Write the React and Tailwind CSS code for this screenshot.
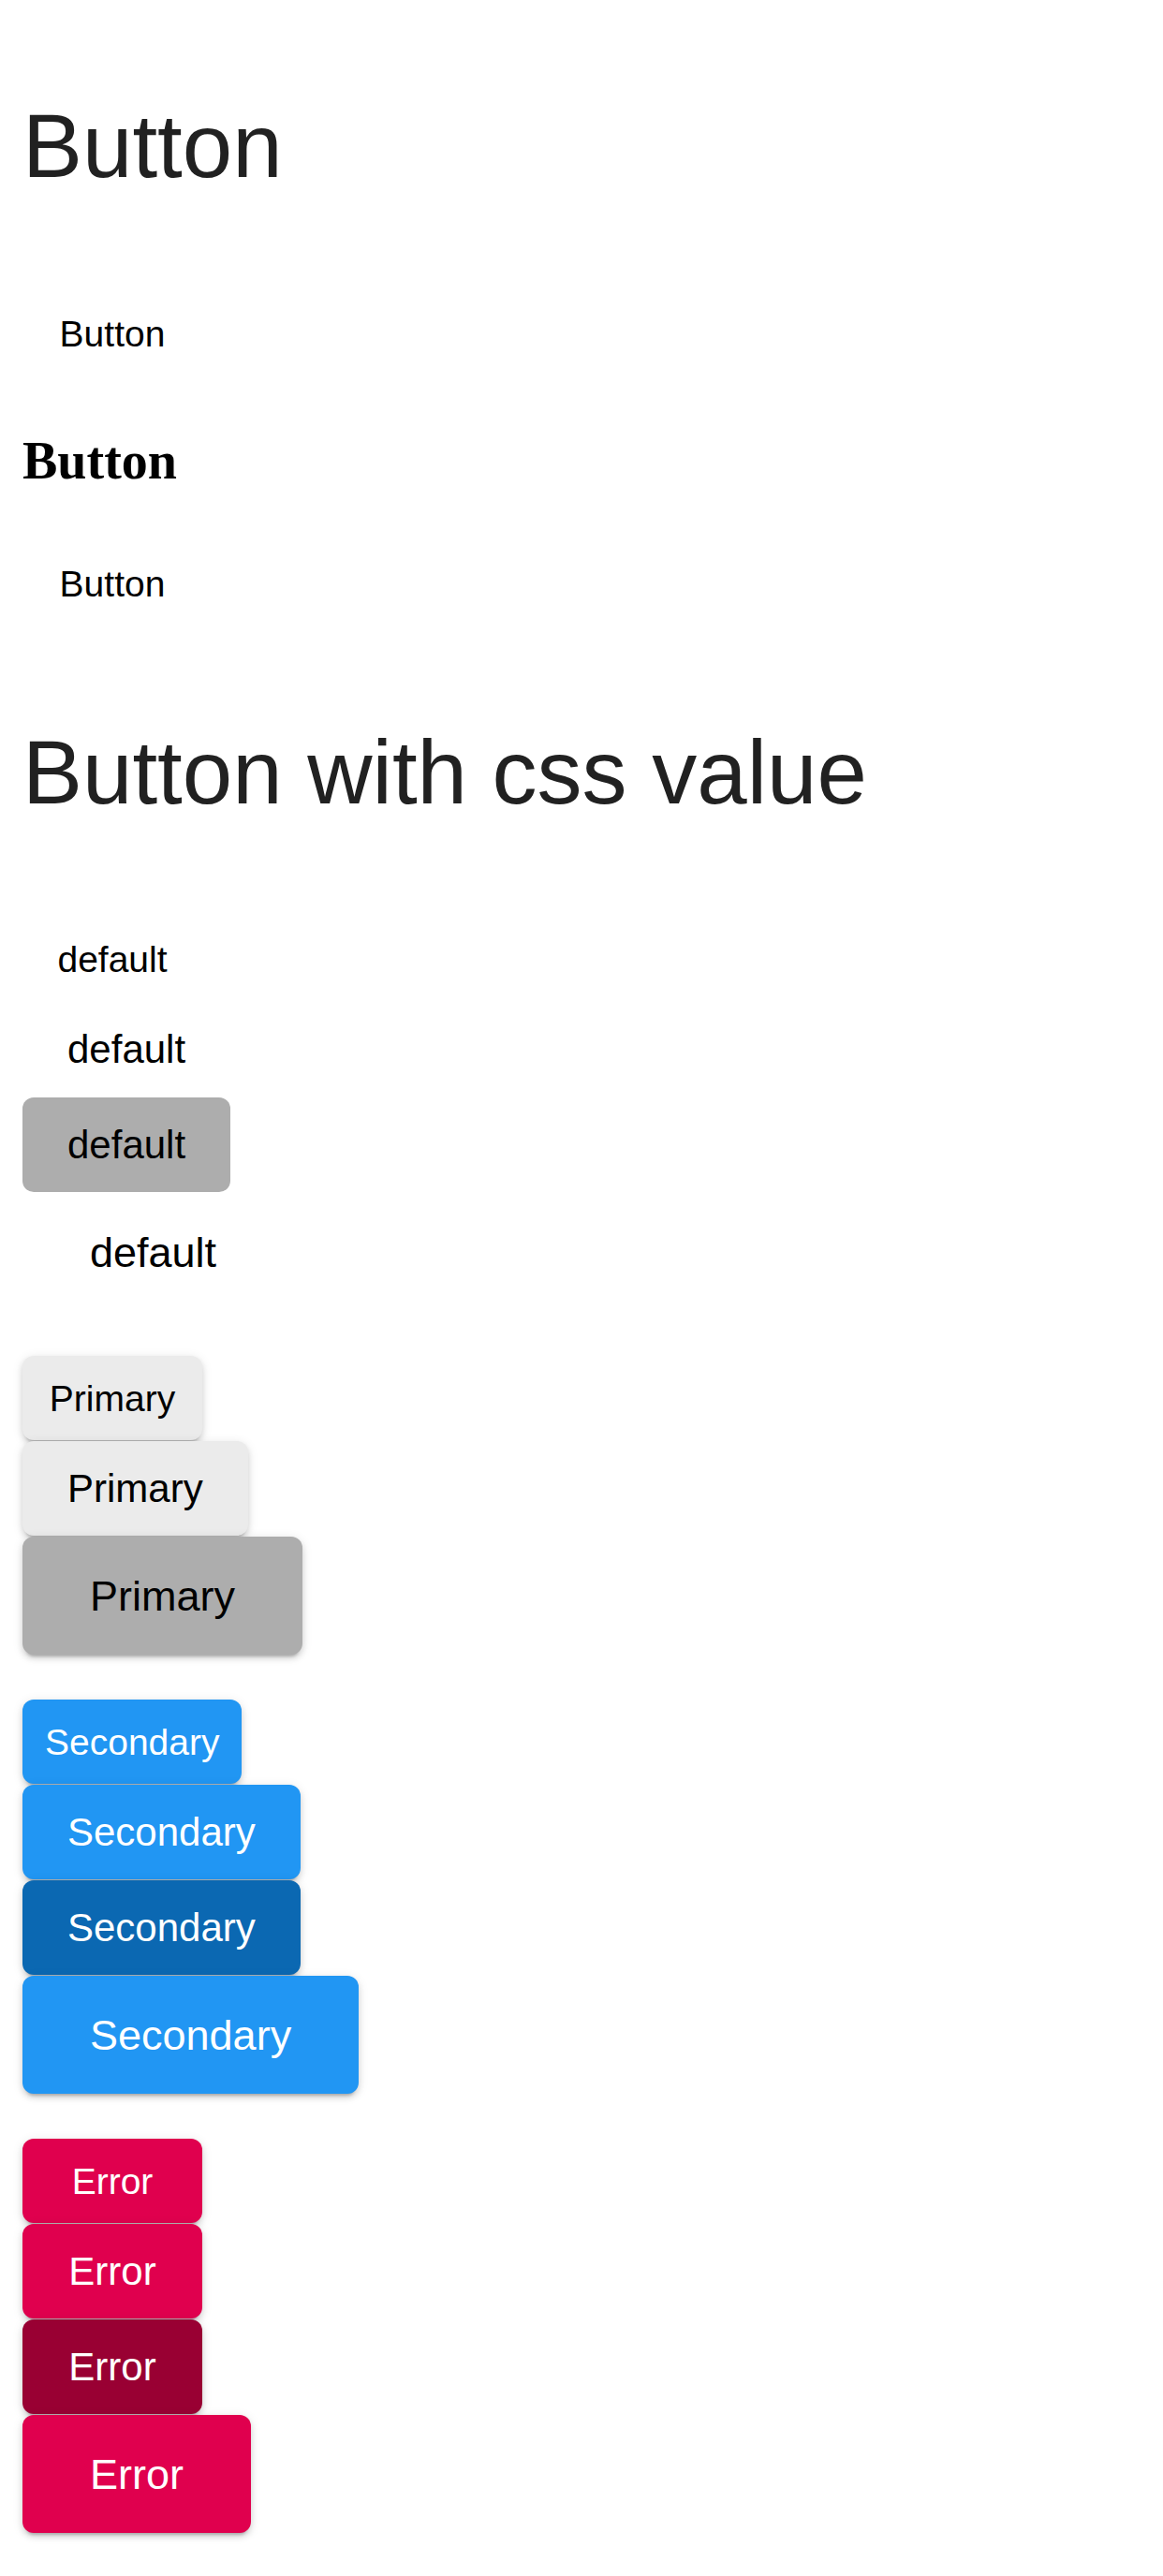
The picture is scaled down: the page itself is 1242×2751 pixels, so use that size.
import React from 'react';

const sizes = {
    small: 'h-[90px] min-w-[192px] px-[24px] text-[39px]',
    medium: 'h-[101px] min-w-[192px] px-[48px] text-[42px]',
    large: 'h-[126px] min-w-[192px] px-[72px] text-[45px]',
};

const variants = {
    text: 'bg-transparent text-black',
    defaultActive: 'bg-[#adadad] text-black',
    primary: 'bg-[#ebebeb] text-black shadow-[0_6px_3px_-4px_rgba(0,0,0,0.2),0_4px_6px_0_rgba(0,0,0,0.12),0_2px_12px_0_rgba(0,0,0,0.1)]',
    primaryActive: 'bg-[#adadad] text-black shadow-[0_6px_3px_-4px_rgba(0,0,0,0.2),0_4px_6px_0_rgba(0,0,0,0.12),0_2px_12px_0_rgba(0,0,0,0.1)]',
    secondary: 'bg-[#2196f3] text-white shadow-[0_6px_3px_-4px_rgba(0,0,0,0.2),0_4px_6px_0_rgba(0,0,0,0.12),0_2px_12px_0_rgba(0,0,0,0.1)]',
    secondaryActive: 'bg-[#0b68b2] text-white shadow-[0_6px_3px_-4px_rgba(0,0,0,0.2),0_4px_6px_0_rgba(0,0,0,0.12),0_2px_12px_0_rgba(0,0,0,0.1)]',
    error: 'bg-[#e0004e] text-white shadow-[0_6px_3px_-4px_rgba(0,0,0,0.2),0_4px_6px_0_rgba(0,0,0,0.12),0_2px_12px_0_rgba(0,0,0,0.1)]',
    errorActive: 'bg-[#990033] text-white shadow-[0_6px_3px_-4px_rgba(0,0,0,0.2),0_4px_6px_0_rgba(0,0,0,0.12),0_2px_12px_0_rgba(0,0,0,0.1)]',
};

function Btn({ size = 'medium', variant = 'text', children }) {
    return (
        <button
            type="button"
            className={`${sizes[size]} ${variants[variant]} inline-flex items-center justify-center rounded-[12px] leading-none font-['Liberation_Sans',Arial,sans-serif]`}
        >
            {children}
        </button>
    );
}

export default function App() {
    const sections = [
        {
            key: 'default',
            items: [
                ['small', 'text', 'default'],
                ['medium', 'text', 'default'],
                ['medium', 'defaultActive', 'default'],
                ['large', 'text', 'default'],
            ],
        },
        {
            key: 'primary',
            items: [
                ['small', 'primary', 'Primary'],
                ['medium', 'primary', 'Primary'],
                ['large', 'primaryActive', 'Primary'],
            ],
        },
        {
            key: 'secondary',
            items: [
                ['small', 'secondary', 'Secondary'],
                ['medium', 'secondary', 'Secondary'],
                ['medium', 'secondaryActive', 'Secondary'],
                ['large', 'secondary', 'Secondary'],
            ],
        },
        {
            key: 'error',
            items: [
                ['small', 'error', 'Error'],
                ['medium', 'error', 'Error'],
                ['medium', 'errorActive', 'Error'],
                ['large', 'error', 'Error'],
            ],
        },
    ];

    return (
        <div className="min-h-[2751px] w-full bg-white px-[24px] font-['Liberation_Sans',Arial,sans-serif]">
            {/* Basic buttons */}
            <h1 className="pt-[108px] text-[96px] leading-none font-normal text-[#212121]">Button</h1>

            <div className="mt-[107px] flex">
                <Btn size="small">Button</Btn>
            </div>

            <div className="mt-[63px] text-[56px] leading-none font-bold text-black font-['Liberation_Serif','Times_New_Roman',serif]">
                Button
            </div>

            <div className="mt-[58px] flex">
                <Btn size="small">Button</Btn>
            </div>

            {/* Buttons with css value */}
            <h2 className="mt-[109px] text-[96px] leading-none font-normal text-[#212121]">Button with css value</h2>

            <div className="mt-[106px] flex flex-col gap-[48px]">
                {sections.map((section) => (
                    <div key={section.key} className="flex flex-col items-start gap-[1px]">
                        {section.items.map(([size, variant, label], i) => (
                            <Btn key={i} size={size} variant={variant}>
                                {label}
                            </Btn>
                        ))}
                    </div>
                ))}
            </div>
        </div>
    );
}
